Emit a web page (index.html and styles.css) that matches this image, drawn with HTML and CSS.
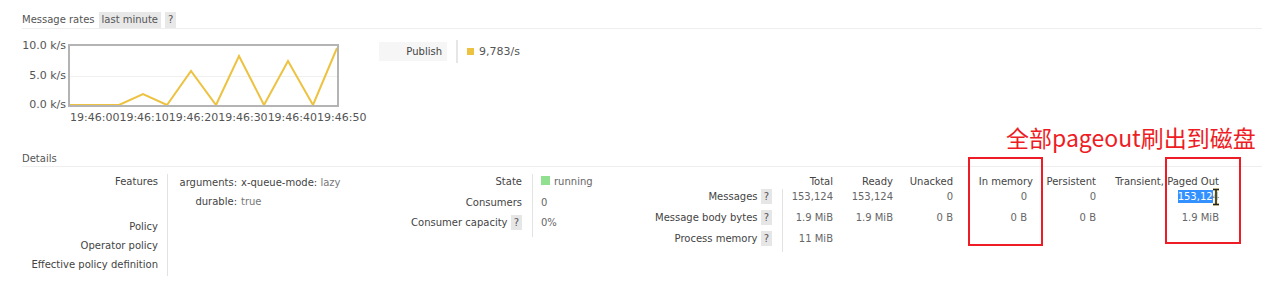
FILE: index.html
```html
<!DOCTYPE html>
<html lang="en">
<head>
  <meta charset="UTF-8" />
  <title>Queue details</title>
  <link rel="stylesheet" href="styles.css">
</head>
<body>

<div class="page">
  <div class="section-head">
    <span>Message rates</span>
    <span class="pill">last minute</span>
    <span class="pill">?</span>
  </div>

  <div class="rates">
    <div class="chart">
      <div class="yaxis">
        <span>10.0 k/s</span>
        <span>5.0 k/s</span>
        <span>0.0 k/s</span>
      </div>
      <svg class="plot" width="271" height="63" viewBox="0 0 271 63">
        <line x1="1" y1="32.5" x2="270" y2="32.5" stroke="#f0f0f0" stroke-width="1"/>
        <polyline fill="none" stroke="#edc240" stroke-width="2" stroke-linejoin="miter"
          points="1,61 51,61 75,50 99,61 123,27 148,61 171,12 196,61 220,17 245,61 269,4"/>
        <rect x="1" y="1" width="269" height="61" fill="none" stroke="#b4b4b4" stroke-width="2"/>
      </svg>
      <div></div>
      <div class="xaxis">
        <span>19:46:00</span><span>19:46:10</span><span>19:46:20</span>
        <span>19:46:30</span><span>19:46:40</span><span>19:46:50</span>
      </div>
    </div>

    <div class="legend">
      <span class="legend-label">Publish</span>
      <span class="legend-value"><i class="swatch"></i>9,783/s</span>
    </div>
  </div>

  <div class="section-head details-head">
    <span>Details</span>
  </div>

  <div class="details">
    <!-- features / policy -->
    <div class="facts facts-features">
      <div class="label tall">Features</div>
      <div class="value tall">
        <div class="kv">
          <span class="k">arguments:</span><span><b>x-queue-mode:</b> <em>lazy</em></span>
          <span class="k">durable:</span><span><em>true</em></span>
        </div>
      </div>
      <div class="label">Policy</div>
      <div class="value"></div>
      <div class="label">Operator policy</div>
      <div class="value"></div>
      <div class="label">Effective policy definition</div>
      <div class="value"></div>
    </div>

    <!-- state -->
    <div class="facts facts-state">
      <div class="label">State</div>
      <div class="value"><i class="state-dot"></i>running</div>
      <div class="label">Consumers</div>
      <div class="value">0</div>
      <div class="label">Consumer capacity <span class="help">?</span></div>
      <div class="value">0%</div>
    </div>

    <!-- message counts -->
    <div class="counts">
      <div class="th"></div>
      <div class="th">Total</div>
      <div class="th">Ready</div>
      <div class="th">Unacked</div>
      <div class="th">In memory</div>
      <div class="th">Persistent</div>
      <div class="th">Transient, Paged Out</div>

      <div class="rl">Messages <span class="help">?</span></div>
      <div class="td first">153,124</div>
      <div class="td">153,124</div>
      <div class="td">0</div>
      <div class="td mem">0</div>
      <div class="td">0</div>
      <div class="td"><span class="sel">153,12</span><span class="caret">4<svg class="ibeam" width="8" height="18" viewBox="0 0 8 18"><path d="M1 1.5h6M1 16.5h6M4 1.5v15" stroke="#f1e3a0" stroke-width="3.2" fill="none"/><path d="M1 1.5h6M1 16.5h6M4 1.5v15" stroke="#222" stroke-width="1.6" fill="none"/></svg></span></div>

      <div class="rl">Message body bytes <span class="help">?</span></div>
      <div class="td first">1.9 MiB</div>
      <div class="td">1.9 MiB</div>
      <div class="td">0 B</div>
      <div class="td mem">0 B</div>
      <div class="td">0 B</div>
      <div class="td">1.9 MiB</div>

      <div class="rl">Process memory <span class="help">?</span></div>
      <div class="td first">11 MiB</div>
      <div class="td"></div>
      <div class="td"></div>
      <div class="td"></div>
      <div class="td"></div>
      <div class="td"></div>
    </div>
  </div>

  <!-- annotations drawn over the screenshot -->
  <div class="note">全部pageout刷出到磁盘</div>
  <div class="mark mark-memory"></div>
  <div class="mark mark-paged"></div>
</div>

</body>
</html>
```

FILE: styles.css
```css
* {
  box-sizing: border-box;
}

body {
  margin: 0;
  font-family: 'DejaVu Sans', Verdana, sans-serif;
  font-size: 10px;
  color: #444;
  background: #fff;
}

.page {
  position: relative;
  width: 1282px;
  height: 286px;
  padding: 12px 20px 0 22px;
  overflow: hidden;
}

.section-head {
  display: flex;
  align-items: center;
  gap: 4px;
  height: 17px;
  padding-bottom: 1px;
  border-bottom: 1px solid #eee;
  color: #555;
}

.section-head .pill {
  background: #e8e8e8;
  padding: 0 3px;
  line-height: 16px;
  color: #555;
}

.details-head {
  margin-top: 27px;
  height: 15px;
}

/* chart */

.rates {
  display: flex;
  padding-top: 15px;
}

.chart {
  display: grid;
  grid-template-columns: 46px 271px;
  font-size: 11px;
  color: #555;
}

.yaxis {
  display: flex;
  flex-direction: column;
  justify-content: space-between;
  align-items: flex-end;
  padding-right: 2px;
  margin: -5px 0 -5px;
  height: 73px;
  line-height: 14px;
}

.plot {
  display: block;
}

.xaxis {
  display: flex;
  margin: 4px 0 0 2px;
  white-space: nowrap;
  line-height: 14px;
}

.xaxis span {
  flex: 0 0 48.2px;
}

.legend {
  display: flex;
  align-items: center;
  height: 23px;
  margin: -4px 0 0 40px;
}

.legend-label {
  width: 68px;
  height: 19px;
  line-height: 19px;
  text-align: right;
  padding-right: 5px;
  background: #f6f6f6;
  color: #444;
}

.legend-value {
  display: flex;
  align-items: center;
  height: 23px;
  margin-left: 9px;
  padding-left: 9px;
  border-left: 2px solid #e6e6e6;
  font-size: 11px;
  color: #555;
}

.swatch {
  width: 7px;
  height: 7px;
  margin-right: 5px;
  background: #edc240;
}

/* details */

.details {
  display: flex;
  padding-top: 7px;
}

.facts {
  display: grid;
  align-content: start;
  line-height: 16px;
}

.facts .label {
  text-align: right;
  padding-right: 9px;
}

.facts .value {
  border-left: 1px solid #e2e2e2;
  padding-left: 10px;
  color: #666;
}

.facts-features {
  width: 368px;
  grid-template-columns: 145px auto;
  grid-template-rows: 45px 19px 19px 19px;
}

.facts-features .value.tall {
  padding-top: 1px;
}

.kv {
  display: grid;
  grid-template-columns: 59px auto;
  column-gap: 4px;
  row-gap: 3px;
  color: #444;
}

.kv .k {
  text-align: right;
}

.kv b {
  font-weight: normal;
}

.kv em {
  font-style: normal;
  color: #777;
}

.facts-state {
  width: 210px;
  grid-template-columns: 142px auto;
  grid-template-rows: 21px 20px 22px;
}

.facts-state .label {
  padding-right: 10px;
}

.facts-state .value {
  padding-left: 8px;
  display: flex;
  align-items: flex-start;
}

.state-dot {
  width: 9px;
  height: 9px;
  margin: 2px 4px 0 0;
  background: #90e090;
}

.help {
  display: inline-block;
  background: #e6e6e6;
  padding: 0 3px;
  line-height: 15px;
  color: #555;
}

.counts {
  display: grid;
  grid-template-columns: 182px 51px 60px 60px 80px 63px 123px;
  grid-template-rows: 15px 21px 21px 21px;
  line-height: 16px;
}

.counts .th {
  text-align: right;
  line-height: 15px;
}

.counts .rl {
  text-align: right;
  padding-right: 10px;
}

.counts .td {
  text-align: right;
  color: #666;
  white-space: nowrap;
}

.counts .first {
  border-left: 1px solid #e2e2e2;
}

.counts .mem {
  padding-right: 6px;
}

.sel {
  background: #3390ff;
  color: #fff;
  padding: 1px 0;
}

.caret {
  position: relative;
}

.ibeam {
  position: absolute;
  left: -1px;
  top: -3px;
}

/* annotations */

.note {
  position: absolute;
  left: 1006px;
  top: 122px;
  font-family: 'Noto Sans CJK SC', 'Noto Sans', sans-serif;
  font-size: 23px;
  line-height: 30px;
  color: #ee1c24;
  white-space: nowrap;
}

.mark {
  position: absolute;
  top: 157px;
  border: 2px solid #ee1c24;
}

.mark-memory {
  left: 968px;
  width: 75px;
  height: 89px;
}

.mark-paged {
  left: 1165px;
  width: 76px;
  height: 87px;
}
```
